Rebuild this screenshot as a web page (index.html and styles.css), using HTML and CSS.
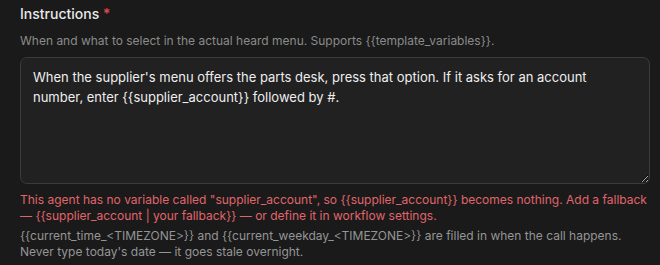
FILE: index.html
```html
<!DOCTYPE html>
<html>
<head>
<meta charset="utf-8">
<link rel="stylesheet" href="styles.css">
</head>
<body>
<div class="field">
  <label class="label">Instructions <span class="req">*</span></label>
  <p class="desc">When and what to select in the actual heard menu. Supports {{template_variables}}.</p>
  <textarea class="input">When the supplier's menu offers the parts desk, press that option. If it asks for an account number, enter {{supplier_account}} followed by #.</textarea>
  <p class="error">This agent has no variable called "supplier_account", so {{supplier_account}} becomes nothing. Add a fallback — {{supplier_account | your fallback}} — or define it in workflow settings.</p>
  <p class="hint">{{current_time_&lt;TIMEZONE&gt;}} and {{current_weekday_&lt;TIMEZONE&gt;}} are filled in when the call happens. Never type today's date — it goes stale overnight.</p>
</div>
</body>
</html>
```
FILE: styles.css
```css
html, body {
  margin: 0;
  padding: 0;
  background: #1a1a1a;
}
body {
  font-family: Inter, "Noto Sans", sans-serif;
  width: 660px;
  height: 265px;
  overflow: hidden;
}
.field {
  display: flex;
  flex-direction: column;
  padding: 5px 10px 0 20px;
}
.label {
  font-size: 14px;
  font-weight: 500;
  color: #e8e8e8;
  line-height: 18px;
}
.req {
  color: #e5484d;
}
.desc {
  margin: 10px 0 0;
  font-size: 12px;
  line-height: 16px;
  color: #8b8b8b;
}
.input {
  margin-top: 8px;
  box-sizing: border-box;
  width: 630px;
  height: 127px;
  background: #212121;
  border: 1px solid #3b3b3b;
  border-radius: 7px;
  color: #eeeeee;
  font-family: Inter, "Noto Sans", sans-serif;
  font-size: 13px;
  line-height: 20px;
  padding: 9px 12px;
  resize: vertical;
  outline: none;
}
.error {
  margin: 8px 0 0;
  font-size: 12px;
  line-height: 16px;
  color: #e0656b;
}
.hint {
  margin: 4px 0 0;
  font-size: 12px;
  line-height: 16px;
  color: #959595;
}
```
